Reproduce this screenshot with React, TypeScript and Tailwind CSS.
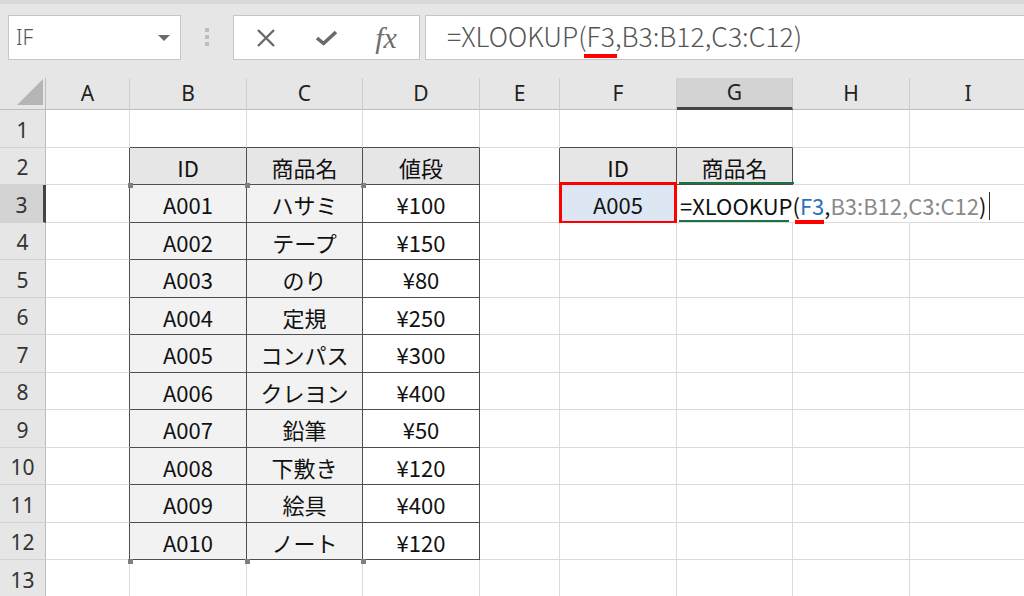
import React from "react";

// Excel-like sheet: XLOOKUP being typed into G3.

const COL_LETTERS = ["A", "B", "C", "D", "E", "F", "G", "H", "I"];

const items: [string, string, string][] = [
  ["A001", "ハサミ", "¥100"],
  ["A002", "テープ", "¥150"],
  ["A003", "のり", "¥80"],
  ["A004", "定規", "¥250"],
  ["A005", "コンパス", "¥300"],
  ["A006", "クレヨン", "¥400"],
  ["A007", "鉛筆", "¥50"],
  ["A008", "下敷き", "¥120"],
  ["A009", "絵具", "¥400"],
  ["A010", "ノート", "¥120"],
];

// row -> col index (0 = A) -> text
function cellText(r: number, c: number): string {
  if (r === 2) {
    if (c === 1 || c === 5) return "ID";
    if (c === 2 || c === 6) return "商品名";
    if (c === 3) return "値段";
  }
  if (r >= 3 && r <= 12 && c >= 1 && c <= 3) return items[r - 3][c - 1];
  if (r === 3 && c === 5) return "A005";
  return "";
}

function inTable(r: number, c: number) {
  if (r >= 2 && r <= 12 && c >= 1 && c <= 3) return true;
  if (r === 2 && (c === 5 || c === 6)) return true;
  if (r === 3 && c === 5) return true;
  return false;
}

function cellBg(r: number, c: number) {
  if (r === 2 && [1, 2, 3, 5, 6].includes(c)) return "bg-[#e7e6e6]";
  if (r >= 3 && r <= 12 && (c === 1 || c === 2)) return "bg-[#f2f2f2]";
  if (r === 3 && c === 5) return "bg-[#dde7f4]";
  return "bg-white";
}

function NameBox() {
  return (
    <div className="ml-[8px] flex h-[45px] w-[173px] items-center justify-between border border-[#c6c6c6] bg-white pl-[7px] pr-[10px]">
      <span className="font-['Noto_Sans',sans-serif] text-[21px] font-light text-[#555]">IF</span>
      <svg width="12" height="6" viewBox="0 0 12 6">
        <path d="M0 0h12L6 6z" fill="#6b6b6b" />
      </svg>
    </div>
  );
}

function Dots() {
  return (
    <div className="flex w-[52px] flex-col items-center gap-[3px] pt-[13px]">
      <span className="h-[4px] w-[4px] bg-[#bdbdbd]" />
      <span className="h-[4px] w-[4px] bg-[#bdbdbd]" />
      <span className="h-[4px] w-[4px] bg-[#bdbdbd]" />
    </div>
  );
}

function FormulaButtons() {
  return (
    <div className="flex h-[45px] w-[187px] items-center border border-[#c6c6c6] bg-white pl-[2px]">
      <div className="flex w-[60px] justify-center">
        <svg width="20" height="18" viewBox="0 0 20 18">
          <path d="M2 1l16 16M18 1L2 17" stroke="#6a6a6a" strokeWidth="2.4" fill="none" />
        </svg>
      </div>
      <div className="flex w-[60px] justify-center">
        <svg width="23" height="16" viewBox="0 0 23 16">
          <path d="M2 8l6.5 5.5L21 2" stroke="#6a6a6a" strokeWidth="3.6" fill="none" strokeLinejoin="round" />
        </svg>
      </div>
      <div className="flex w-[60px] justify-center">
        <span className="font-['Liberation_Serif',serif] text-[30px] italic leading-none text-[#6e6e6e]">fx</span>
      </div>
    </div>
  );
}

function FormulaInput() {
  return (
    <div className="ml-[5px] flex h-[45px] flex-1 items-center border-y border-l border-[#c6c6c6] bg-white pb-[3px] pl-[21px]">
      <span className="whitespace-nowrap font-['Noto_Sans_CJK_JP',sans-serif] text-[26.5px] font-light leading-none text-[#555]">
        =XLOOKUP(
        <span className="relative">
          F3
          <span className="absolute left-[-3px] right-[-2px] top-[38px] h-[4px] bg-[#ff0000]" />
        </span>
        ,B3:B12,C3:C12)
      </span>
    </div>
  );
}

function EditingText() {
  return (
    <span className="whitespace-nowrap">
      <span className="text-[#111]">=XLOOKUP(</span>
      <span className="relative text-[#2f6fbf]">
        F3
        <span className="absolute left-[-5px] right-0 top-[31px] h-[4px] bg-[#ff0000]" />
      </span>
      <span className="text-[#111]">,</span>
      <span className="text-[#8a8a8a]">B3:B12,C3:C12</span>
      <span className="text-[#111]">)</span>
      <span className="ml-[3px] inline-block h-[28px] w-[1px] translate-y-[5px] bg-[#333]" />
    </span>
  );
}

function Sheet() {
  const rows = Array.from({ length: 13 }, (_, i) => i + 1);
  return (
    <div className="relative grid grid-cols-[46px_84px_117px_116px_117px_80px_117px_116px_117px_117px] grid-rows-[32px_repeat(13,37.5px)]">
      {/* corner */}
      <div className="flex items-end justify-end border-r border-b border-[#bdbdbd] bg-[#e6e6e6] pb-[4px] pr-[2px]">
        <svg width="26" height="26" viewBox="0 0 26 26">
          <path d="M26 0V26H0z" fill="#b5b5b5" />
        </svg>
      </div>
      {COL_LETTERS.map((l) =>
        l === "G" ? (
          <div
            key={l}
            className="flex items-center justify-center border-r border-r-[#c6c6c6] border-b-[3px] border-b-[#444] bg-[#d3d3d3] font-['Noto_Sans',sans-serif] text-[21px] text-[#222]"
          >
            {l}
          </div>
        ) : (
          <div
            key={l}
            className="flex items-center justify-center border-r border-b border-r-[#cdcdcd] border-b-[#bdbdbd] bg-[#e6e6e6] font-['Noto_Sans',sans-serif] text-[21px] text-[#222]"
          >
            {l}
          </div>
        )
      )}

      {rows.map((r) => (
        <React.Fragment key={r}>
          {r === 3 ? (
            <div className="flex items-center justify-center border-b border-b-[#d3d3d3] border-r-[3px] border-r-[#444] bg-[#d3d3d3] pt-[4px] font-['Noto_Sans',sans-serif] text-[21px] text-[#333]">
              {r}
            </div>
          ) : (
            <div className="flex items-center justify-center border-r border-b border-r-[#bdbdbd] border-b-[#d3d3d3] bg-[#e6e6e6] pt-[4px] font-['Noto_Sans',sans-serif] text-[21px] text-[#333]">
              {r}
            </div>
          )}
          {COL_LETTERS.map((_, c) => {
            const darkR = inTable(r, c) || inTable(r, c + 1);
            const darkB = inTable(r, c) || inTable(r + 1, c);
            const overflow = r === 3 && (c === 6 || c === 7);
            const right = overflow
              ? "border-r border-r-white"
              : darkR
              ? "border-r border-r-[#4f4f4f]"
              : "border-r border-r-[#dadada]";
            const bottom = darkB ? "border-b border-b-[#4f4f4f]" : "border-b border-b-[#dadada]";
            const isEdit = r === 3 && c === 6;
            return (
              <div
                key={c}
                className={`${right} ${bottom} ${cellBg(r, c)} ${
                  isEdit ? "relative z-10 flex items-center justify-start pl-[3px] pt-[3px]" : "relative flex items-center justify-center pt-[3px]"
                } font-['Noto_Sans_CJK_JP',sans-serif] text-[22px] whitespace-nowrap text-[#111]`}
              >
                {isEdit ? <EditingText /> : cellText(r, c)}
                {isEdit && (
                  <>
                    <span className="absolute left-[2px] right-[-2px] top-[-3px] h-[2px] bg-[#1e7145]" />
                    <span className="absolute bottom-[0px] left-[2px] right-[3px] h-[2px] bg-[#1e7145]" />
                  </>
                )}
                {r === 3 && c === 5 && (
                  <span className="absolute bottom-[-2px] left-[-1px] right-[-1px] top-[-3px] border-[3px] border-[#ff0000]" />
                )}
              </div>
            );
          })}
        </React.Fragment>
      ))}

      {/* range handles */}
      {[128, 245, 361].map((x) => (
        <React.Fragment key={x}>
          <span className="absolute top-[105px] h-[5px] w-[5px] bg-[#7f7f7f]" style={{ left: x }} />
          <span className="absolute top-[481px] h-[5px] w-[5px] bg-[#7f7f7f]" style={{ left: x }} />
        </React.Fragment>
      ))}
    </div>
  );
}

export default function App() {
  return (
    <div className="h-[596px] w-[1024px] overflow-hidden bg-white">
      <div className="flex h-[78px] items-start border-t-[4px] border-[#d9d9d9] bg-[#e6e6e6] pt-[11px]">
        <NameBox />
        <Dots />
        <FormulaButtons />
        <FormulaInput />
      </div>
      <Sheet />
    </div>
  );
}
